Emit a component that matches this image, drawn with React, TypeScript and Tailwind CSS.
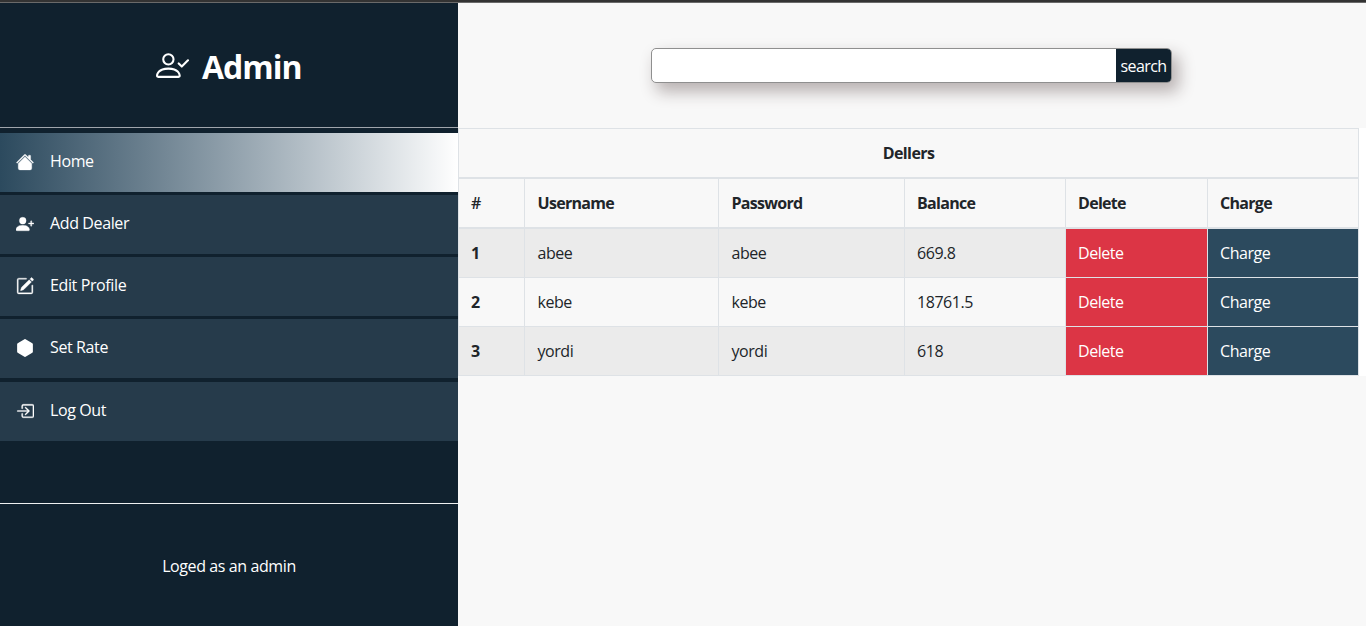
import type { ReactNode } from "react";
import { BsHouseFill, BsPersonPlusFill, BsPencilSquare, BsHexagonFill, BsBoxArrowInRight } from "react-icons/bs";

const bold = "stroke-current [stroke-width:0.3]";

const menu: { label: string; icon: ReactNode; cls: string }[] = [
  { label: "Home", icon: <BsHouseFill size={18} className={bold} />, cls: "bg-linear-to-r from-[#2c4a5e] to-white mb-[3px]" },
  { label: "Add Dealer", icon: <BsPersonPlusFill size={18} className={bold} />, cls: "bg-[#263b4b] mb-[3px]" },
  { label: "Edit Profile", icon: <BsPencilSquare size={18} className={bold} />, cls: "bg-[#263b4b] mb-[3px]" },
  { label: "Set Rate", icon: <BsHexagonFill size={18} />, cls: "bg-[#263b4b] mb-1" },
  { label: "Log Out", icon: <BsBoxArrowInRight size={18} className={bold} />, cls: "bg-[#263b4b]" },
];

const rows = [
  { id: 1, user: "abee", pass: "abee", balance: "669.8" },
  { id: 2, user: "kebe", pass: "kebe", balance: "18761.5" },
  { id: 3, user: "yordi", pass: "yordi", balance: "618" },
];

const cols = "grid grid-cols-[66px_194px_186px_161px_142px_151px] border-l border-[#dee2e6]";
const cell = "flex items-center border-r border-[#dee2e6] pl-3";
const cellWide = "flex items-center border-r border-[#dee2e6] pl-[12.5px]";

function PersonCheck() {
  return (
    <svg width="33" height="33" viewBox="0 0 16 16" fill="currentColor">
      <path
        fillRule="evenodd"
        d="M8 5a2 2 0 1 1-4 0 2 2 0 0 1 4 0zM6 8a3 3 0 1 0 0-6 3 3 0 0 0 0 6zm6 5c0 1-1 1-1 1H1s-1 0-1-1 1-4 6-4 6 3 6 4zm-1-.004c-.001-.246-.154-.986-.832-1.664C9.516 10.68 8.289 10 6 10c-2.29 0-3.516.68-4.168 1.332-.678.678-.83 1.418-.832 1.664h10z"
      />
      <path d="M15.854 5.146a.5.5 0 0 1 0 .708l-3 3a.5.5 0 0 1-.708 0l-1.5-1.5a.5.5 0 0 1 .708-.708L12.5 7.793l2.646-2.647a.5.5 0 0 1 .708 0z" />
    </svg>
  );
}

function Sidebar() {
  return (
    <aside className="flex w-[458px] shrink-0 flex-col bg-[#10212e] text-white">
      <div className="flex h-[125px] items-center border-b border-[#a0a5ac] pl-[156px] pt-px">
        <PersonCheck />
        <h1 className="ml-[13px] pt-[2px] text-[32px] font-bold leading-none tracking-[-1px]">Admin</h1>
      </div>
      <nav className="h-[375px] pt-[5px]">
        {menu.map((m) => (
          <div key={m.label} className={`flex h-[59px] items-center pb-px pl-4 ${m.cls}`}>
            {m.icon}
            <span className="ml-4 pb-[2px] tracking-[-0.38px]">{m.label}</span>
          </div>
        ))}
      </nav>
      <div className="flex flex-1 items-center justify-center border-t border-[#eef0f1] pt-[2px]">
        <span className="tracking-[-0.4px]">Loged as an admin</span>
      </div>
    </aside>
  );
}

export default function App() {
  return (
    <div className="flex h-[626px] w-[1366px] flex-col overflow-hidden bg-[#f8f8f8] font-['Open_Sans',sans-serif] text-base leading-6 text-[#212529]">
      <div className="h-[3px] shrink-0 border-b border-[#6a6a6a] bg-[#333]" />
      <div className="flex min-h-0 flex-1">
        <Sidebar />
        <main className="flex-1">
          <div className="h-[125px] pl-[193px] pt-[45px]">
            <div className="flex h-[35px] w-[521px] overflow-hidden rounded-[5px] border border-[#8f8f8f] bg-white shadow-[6px_8px_16px_1px_#b9b2b2]">
              <input className="min-w-0 flex-1 outline-none" />
              <button className="w-[55px] bg-[#10212e] pt-px tracking-[-0.55px] text-white">search</button>
            </div>
          </div>
          <div className="bg-white">
            <div className="w-[901px] bg-[#f8f8f8]">
              <div className="flex h-[51px] items-center justify-center border border-b-2 border-[#dee2e6] font-bold tracking-[-0.6px]">Dellers</div>
              <div className={`${cols} h-[50px] border-b-2 font-bold tracking-[-0.7px]`}>
                <div className={`${cell} font-semibold`}>#</div>
                <div className={cellWide}>Username</div>
                <div className={cellWide}>Password</div>
                <div className={cell}>Balance</div>
                <div className={cell}>Delete</div>
                <div className={cell}>Charge</div>
              </div>
              {rows.map((r) => (
                <div key={r.id} className={`${cols} h-[49px] border-b tracking-[-0.45px] odd:bg-[#ebebeb]`}>
                  <div className={`${cell} font-bold`}>{r.id}</div>
                  <div className={cellWide}>{r.user}</div>
                  <div className={cellWide}>{r.pass}</div>
                  <div className={cell}>{r.balance}</div>
                  <div className={`${cell} bg-[#dc3545] text-white`}>Delete</div>
                  <div className={`${cell} bg-[#2c4a5e] text-white`}>Charge</div>
                </div>
              ))}
            </div>
          </div>
        </main>
      </div>
    </div>
  );
}
